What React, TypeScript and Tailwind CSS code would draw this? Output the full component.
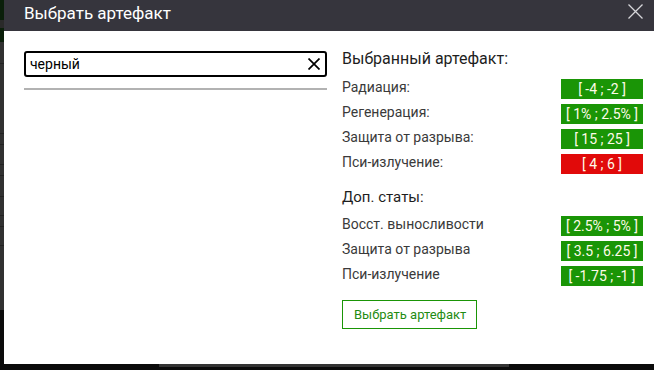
const mainStats = [
  { label: 'Радиация:', value: '[ -4 ; -2 ]', bad: false },
  { label: 'Регенерация:', value: '[ 1% ; 2.5% ]', bad: false },
  { label: 'Защита от разрыва:', value: '[ 15 ; 25 ]', bad: false },
  { label: 'Пси-излучение:', value: '[ 4 ; 6 ]', bad: true },
];

const extraStats = [
  { label: 'Восст. выносливости', value: '[ 2.5% ; 5% ]', bad: false },
  { label: 'Защита от разрыва', value: '[ 3.5 ; 6.25 ]', bad: false },
  { label: 'Пси-излучение', value: '[ -1.75 ; -1 ]', bad: false },
];

const Cross = ({ size, stroke, color }: { size: number; stroke: number; color: string }) => (
  <svg width={size} height={size} viewBox={`0 0 ${size} ${size}`} fill="none">
    <path d={`M0.5 0.5L${size - 0.5} ${size - 0.5}M${size - 0.5} 0.5L0.5 ${size - 0.5}`} stroke={color} strokeWidth={stroke} />
  </svg>
);

const StatRow = ({ label, value, bad }: { label: string; value: string; bad: boolean }) => (
  <div className="flex items-start justify-between h-5">
    <span className="text-[14px] leading-[16px] text-[#3a3a3a]">{label}</span>
    <span
      className={`w-[82px] h-5 flex items-center justify-center text-[14px] text-[#fffbe8] ${
        bad ? 'bg-[#e10a0a]' : 'bg-[#1a9506]'
      }`}
    >
      {value}
    </span>
  </div>
);

export default function App() {
  return (
    <div
      className="relative w-[654px] h-[370px] overflow-hidden bg-[#0b0b0b]"
      style={{ fontFamily: 'Roboto, "Liberation Sans", sans-serif' }}
    >
      {/* page behind the modal */}
      <div className="absolute left-0 top-0 w-[4px] h-[310px] bg-[#313131] flex flex-col">
        <div className="h-[20px] bg-[#0a1f0a]" />
        <div className="h-[8px] bg-[#2a2a2a]" />
        <div className="h-[14px] bg-[#0a1f0a]" />
        <div className="h-[21px]" />
        <div className="h-px bg-[#222]" />
        <div className="h-[69px]" />
        <div className="h-px bg-[#222]" />
        <div className="h-[10px]" />
        <div className="h-px bg-[#222]" />
        <div className="h-[19px]" />
        <div className="h-px bg-[#222]" />
        <div className="h-[10px]" />
        <div className="h-px bg-[#222]" />
        <div className="h-[20px]" />
        <div className="h-px bg-[#222]" />
        <div className="h-[18px]" />
        <div className="h-px bg-[#222]" />
        <div className="h-[10px]" />
        <div className="h-px bg-[#222]" />
        <div className="h-[18px]" />
        <div className="h-px bg-[#222]" />
      </div>
      <div className="absolute left-[159px] top-[364px] w-[350px] h-[3px] bg-[#333]" />

      {/* modal */}
      <div className="absolute left-[4px] top-0 w-[650px] h-[364px] bg-white flex flex-col">
        <div className="h-[31px] bg-[#36353d] flex items-start justify-between pl-5 pr-[11px]">
          <h1 className="text-[17px] leading-[20px] pt-[3px] text-white">Выбрать артефакт</h1>
          <div className="mt-[4px]">
            <Cross size={15} stroke={1.3} color="#d6d6da" />
          </div>
        </div>

        <div className="flex flex-1 pl-5 pt-5 pr-[11px] gap-[15px]">
          {/* search */}
          <div className="w-[303px] flex flex-col">
            <div className="h-[26px] border-2 border-black rounded-[3px] flex items-center pl-[4px] pr-[5px]">
              <span className="flex-1 text-[14px] text-black leading-none">черный</span>
              <Cross size={12} stroke={1.7} color="#000" />
            </div>
            <div className="mt-[11px] h-[2px] bg-[#b2b2b2]" />
          </div>

          {/* selected artifact */}
          <div className="flex-1 flex flex-col">
            <h2 className="text-[16px] leading-[20px] text-[#1e1e1e] -mt-[2px]">Выбранный артефакт:</h2>
            <div className="mt-[10px] flex flex-col gap-[5px]">
              {mainStats.map((s) => (
                <StatRow key={s.label} {...s} />
              ))}
            </div>

            <h3 className="mt-[13px] text-[15px] leading-[20px] text-[#1e1e1e]">Доп. статы:</h3>
            <div className="mt-[9px] flex flex-col gap-[5px]">
              {extraStats.map((s) => (
                <StatRow key={s.label} {...s} />
              ))}
            </div>

            <button className="mt-[14px] self-start h-[29px] pl-[11px] pr-[10px] border border-[#1a9506] text-[13px] text-[#1f8c12] bg-white">
              Выбрать артефакт
            </button>
          </div>
        </div>
      </div>
    </div>
  );
}
